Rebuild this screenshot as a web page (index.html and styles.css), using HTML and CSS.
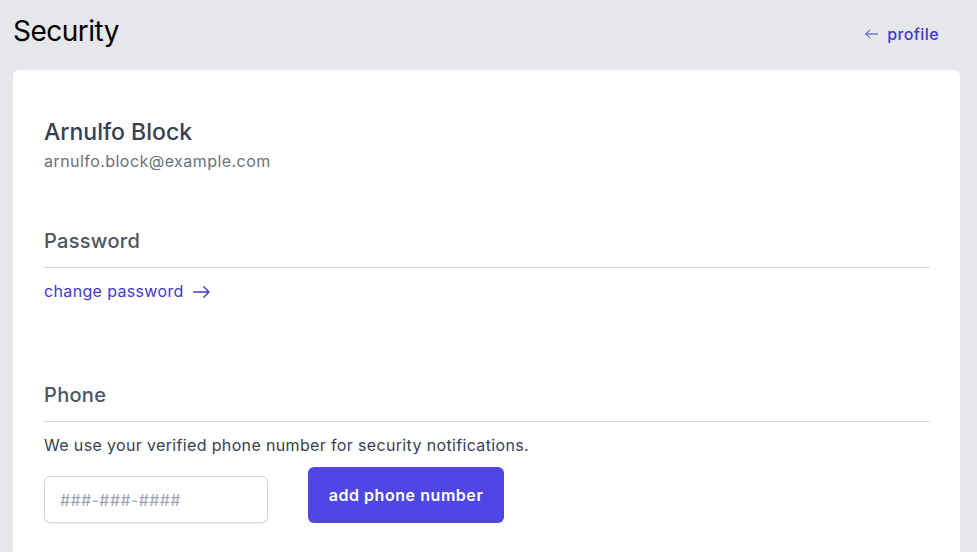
FILE: index.html
```html
<!DOCTYPE html>
<html lang="en">
<head>
<meta charset="utf-8">
<title>Security</title>
<link rel="stylesheet" href="styles.css">
</head>
<body>
<div class="page">
  <header class="top">
    <h1 class="title">Security</h1>
    <a class="back" href="#"><svg class="arrow-l" width="13" height="10" viewBox="0 0 13 10" fill="none" stroke="currentColor" stroke-width="1" stroke-linecap="round" stroke-linejoin="round"><path d="M12.5 5H0.8M4.8 1L0.8 5l4 4"/></svg>profile</a>
  </header>
  <main class="card">
    <section class="user">
      <h2 class="name">Arnulfo Block</h2>
      <p class="email">arnulfo.block@example.com</p>
    </section>
    <section class="section">
      <h3 class="section-title">Password</h3>
      <a class="link" href="#">change password<svg class="arrow-r" width="17" height="12" viewBox="0 0 17 12" fill="none" stroke="currentColor" stroke-width="1.3" stroke-linecap="round" stroke-linejoin="round"><path d="M0.8 6H16M10.8 0.8L16 6l-5.2 5.2"/></svg></a>
    </section>
    <section class="section phone">
      <h3 class="section-title">Phone</h3>
      <p class="desc">We use your verified phone number for security notifications.</p>
      <form class="phone-form">
        <input class="input" type="text" placeholder="###-###-####">
        <button class="btn" type="button">add phone number</button>
      </form>
    </section>
  </main>
</div>
</body>
</html>
```
FILE: styles.css
```css
* { box-sizing: border-box; }
html, body { margin: 0; padding: 0; }
body {
  background: #e5e7eb;
  font-family: Inter, "Noto Sans", "Liberation Sans", sans-serif;
  color: #111827;
  height: 552px;
  overflow: hidden;
}
.page { padding: 0 17px 0 13px; }
.top {
  display: flex;
  justify-content: space-between;
  align-items: center;
  height: 70px;
  padding-bottom: 8px;
}
.title {
  margin: 0;
  font-size: 28px;
  font-weight: 400;
  color: #000;
  letter-spacing: -0.5px;
}
.back {
  display: flex;
  align-items: center;
  color: #4338ca;
  text-decoration: none;
  font-size: 16px;
  font-weight: 500;
  letter-spacing: 0.4px;
  margin-right: 21px;
  margin-top: 5px;
}
.arrow-l { margin-right: 9px; margin-top: 1px; }
.card {
  background: #fff;
  border-radius: 6px;
  padding: 47px 30px 40px 31px;
  min-height: 500px;
}
.name {
  margin: 0;
  font-size: 23px;
  font-weight: 500;
  color: #374151;
  line-height: 30px;
}
.email {
  margin: 0;
  font-size: 16px;
  color: #6b7280;
  line-height: 28px;
  letter-spacing: 0.45px;
}
.section { margin-top: 52px; }
.section-title {
  margin: 0;
  font-size: 20px;
  font-weight: 500;
  color: #4b5563;
  padding-bottom: 12px;
  border-bottom: 1px solid #d1d5db;
  line-height: 28px;
  letter-spacing: 0.3px;
}
.link {
  display: inline-flex;
  align-items: center;
  margin-top: 11px;
  color: #4338ca;
  text-decoration: none;
  font-size: 16px;
  line-height: 24px;
  letter-spacing: 0.35px;
}
.arrow-r { margin-left: 9px; margin-top: 1px; }
.phone { margin-top: 78px; }
.desc {
  margin: 11px 0 0;
  font-size: 16px;
  color: #374151;
  line-height: 24px;
  letter-spacing: 0.35px;
}
.phone-form {
  display: flex;
  align-items: flex-end;
  gap: 40px;
  margin-top: 10px;
}
.input {
  width: 224px;
  height: 47px;
  border: 1px solid #d1d5db;
  border-radius: 6px;
  padding: 0 15px;
  font: inherit;
  font-size: 16px;
  letter-spacing: 0.4px;
  color: #111827;
  box-shadow: 0 1px 2px rgba(0,0,0,0.05);
}
.input::placeholder { color: #9ca3af; }
.btn {
  height: 56px;
  width: 196px;
  background: #4f46e5;
  color: #fff;
  border: 0;
  border-radius: 6px;
  font: inherit;
  font-size: 16px;
  font-weight: 600;
  letter-spacing: 0.55px;
}
```
